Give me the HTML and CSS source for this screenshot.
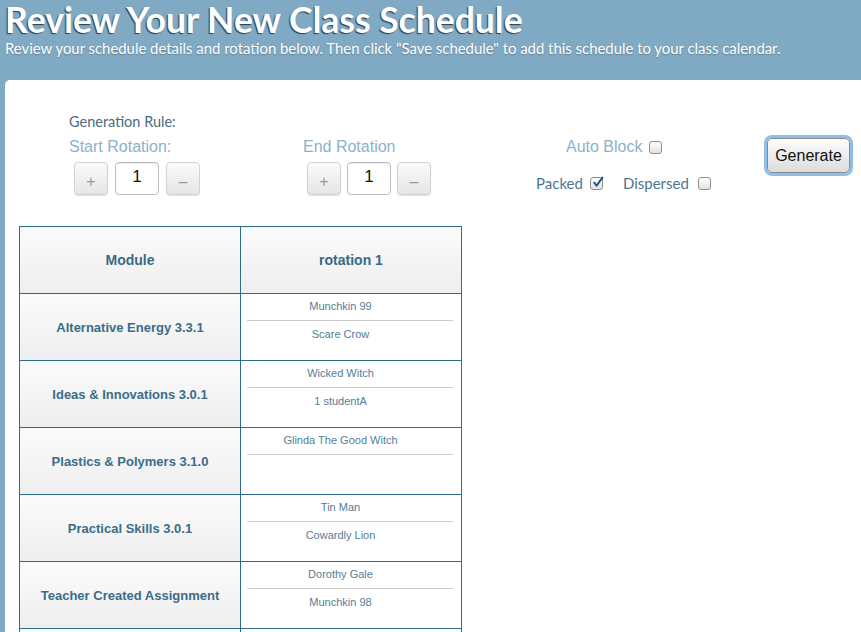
FILE: index.html
```html
<!DOCTYPE html>
<html lang="en">
<head>
<meta charset="utf-8">
<title>Review Your New Class Schedule</title>
<link rel="stylesheet" href="styles.css">
</head>
<body>
<header class="header">
  <h1 class="title">Review Your New Class Schedule</h1>
  <p class="subtitle">Review your schedule details and rotation below. Then click "Save schedule" to add this schedule to your class calendar.</p>
</header>
<main class="panel">
  <div class="controls">
    <div class="gen-rule">Generation Rule:</div>
    <div class="control-row">
      <div class="group g1">
        <div class="rot-label">Start Rotation:</div>
        <div class="stepper">
          <button class="step">+</button>
          <input class="step-input" value="1">
          <button class="step">–</button>
        </div>
      </div>
      <div class="group g2">
        <div class="rot-label">End Rotation</div>
        <div class="stepper">
          <button class="step">+</button>
          <input class="step-input" value="1">
          <button class="step">–</button>
        </div>
      </div>
      <div class="group g3">
        <div class="auto-line"><span class="auto-label">Auto Block</span><span class="cb"></span></div>
        <div class="mode-line">
          <span class="mode-label">Packed</span><span class="cb checked"><svg viewBox="0 0 12 12" width="13" height="13"><path d="M3 6.2 L5.2 9 L10.5 1.5" fill="none" stroke="#1f4f8f" stroke-width="1.8" stroke-linecap="round" stroke-linejoin="round"/></svg></span>
          <span class="mode-label disp">Dispersed</span><span class="cb"></span>
        </div>
      </div>
      <div class="group g4">
        <button class="generate">Generate</button>
      </div>
    </div>
  </div>

  <table class="schedule">
    <thead>
      <tr><th class="mod-cell head">Module</th><th class="mod-cell head">rotation 1</th></tr>
    </thead>
    <tbody>
      <tr>
        <td class="mod-cell">Alternative Energy 3.3.1</td>
        <td class="rot-cell"><div class="slot first">Munchkin 99</div><div class="slot">Scare Crow</div></td>
      </tr>
      <tr>
        <td class="mod-cell">Ideas &amp; Innovations 3.0.1</td>
        <td class="rot-cell"><div class="slot first">Wicked Witch</div><div class="slot">1 studentA</div></td>
      </tr>
      <tr>
        <td class="mod-cell">Plastics &amp; Polymers 3.1.0</td>
        <td class="rot-cell"><div class="slot first">Glinda The Good Witch</div><div class="slot"></div></td>
      </tr>
      <tr>
        <td class="mod-cell">Practical Skills 3.0.1</td>
        <td class="rot-cell"><div class="slot first">Tin Man</div><div class="slot">Cowardly Lion</div></td>
      </tr>
      <tr>
        <td class="mod-cell">Teacher Created Assignment</td>
        <td class="rot-cell"><div class="slot first">Dorothy Gale</div><div class="slot">Munchkin 98</div></td>
      </tr>
      <tr>
        <td class="mod-cell"></td>
        <td class="rot-cell"><div class="slot first"></div><div class="slot"></div></td>
      </tr>
    </tbody>
  </table>
</main>
</body>
</html>
```

FILE: styles.css
```css
html, body {
  margin: 0;
  padding: 0;
  height: 100%;
  overflow: hidden;
}
body {
  background: #80a9c3;
  font-family: "Lato", "Liberation Sans", sans-serif;
}
.header {
  padding: 0 0 0 5px;
  height: 80px;
}
.title {
  margin: 0;
  font-size: 35.5px;
  line-height: 39px;
  font-weight: 700;
  color: #fff;
  text-shadow: -1px 1px 1px rgba(0, 0, 0, 0.65);
}
.subtitle {
  margin: 0;
  font-size: 14.9px;
  line-height: 18px;
  color: #fff;
  text-shadow: 0 1px 1px rgba(0, 0, 0, 0.25);
}
.panel {
  margin-left: 5px;
  background: #fff;
  border-radius: 5px 0 0 0;
  padding: 32px 0 0 14px;
  min-height: 600px;
}
.controls {
  padding-left: 50px;
}
.gen-rule {
  font-size: 14.5px;
  line-height: 20px;
  color: #4b6b80;
}
.control-row {
  display: flex;
  align-items: flex-start;
  margin-top: 5px;
}
.group.g1 { width: 234px; }
.group.g2 { width: 233px; }
.group.g3 { width: 231px; }
.rot-label {
  font-family: "Liberation Sans", Arial, sans-serif;
  font-size: 16px;
  line-height: 20px;
  color: #8cb2c8;
}
.stepper {
  display: flex;
  align-items: flex-start;
  gap: 7px;
  margin-top: 5px;
  padding-left: 5px;
}
.g2 .stepper { padding-left: 4px; gap: 6px; }
.step {
  width: 34px;
  height: 33px;
  padding: 7px 0 0;
  border: 1px solid #d2d2d2;
  border-radius: 4px;
  background: linear-gradient(#fafafa, #e6e6e6);
  box-shadow: 0 1px 1px rgba(0, 0, 0, 0.12);
  color: #9a9a9a;
  font-family: "Liberation Sans", Arial, sans-serif;
  font-size: 16px;
  line-height: 20px;
}
.step-input {
  box-sizing: border-box;
  width: 44px;
  height: 33px;
  margin: 0;
  border: 1px solid #bdbdbd;
  border-radius: 4px;
  padding: 0 0 4px;
  text-align: center;
  font-family: "Liberation Sans", Arial, sans-serif;
  font-size: 17px;
  color: #111;
  background: #fff;
  box-shadow: inset 0 1px 1px rgba(0, 0, 0, 0.08);
}
.auto-line {
  display: flex;
  align-items: center;
  height: 20px;
  padding-left: 30px;
}
.auto-label {
  font-family: "Liberation Sans", Arial, sans-serif;
  font-size: 16px;
  color: #8cb2c8;
  margin-right: 7px;
}
.mode-line {
  display: flex;
  align-items: center;
  height: 20px;
  margin-top: 16px;
}
.mode-label {
  font-size: 15px;
  color: #4e7590;
  margin-right: 7px;
}
.mode-label.disp {
  margin-left: 20px;
  margin-right: 9px;
}
.cb {
  box-sizing: border-box;
  display: inline-block;
  width: 13px;
  height: 13px;
  border: 1px solid #8f8f8f;
  border-radius: 3px;
  background: linear-gradient(#ffffff, #e2e2e2);
  position: relative;
  top: 0;
}
.cb svg {
  position: absolute;
  left: 0;
  top: -2px;
}
.generate {
  margin-top: 1px;
  width: 83px;
  height: 35px;
  padding: 0;
  border: 1px solid #8a8a8a;
  border-radius: 5px;
  background: linear-gradient(#fdfdfd, #dcdcdc);
  box-shadow: 0 0 0 3px #8fbee8;
  font-family: "Liberation Sans", Arial, sans-serif;
  font-size: 16px;
  color: #111;
  outline: none;
}
.schedule {
  margin-top: 31px;
  border-collapse: collapse;
  width: 443px;
  table-layout: fixed;
  font-family: "Liberation Sans", Arial, sans-serif;
}
.schedule th,
.schedule td {
  border: 1px solid #2f6b8a;
  padding: 0;
}
.mod-cell {
  width: 220px;
  height: 66px;
  text-align: center;
  vertical-align: middle;
  background: linear-gradient(#fcfbfb, #eeeeee);
  color: #3b6c88;
  font-size: 13px;
  font-weight: 700;
}
.mod-cell.head {
  font-size: 14px;
  color: #386a86;
}
.rot-cell {
  height: 66px;
  vertical-align: top;
  padding: 0 8px 0 6px !important;
  background: #fff;
}
.slot {
  height: 27px;
  line-height: 25px;
  text-align: center;
  padding-right: 19px;
  font-size: 11px;
  color: #557d95;
}
.slot.first {
  height: 26px;
  border-bottom: 1px solid #cccccc;
}
.slot + .slot {
  line-height: 27px;
}
```
